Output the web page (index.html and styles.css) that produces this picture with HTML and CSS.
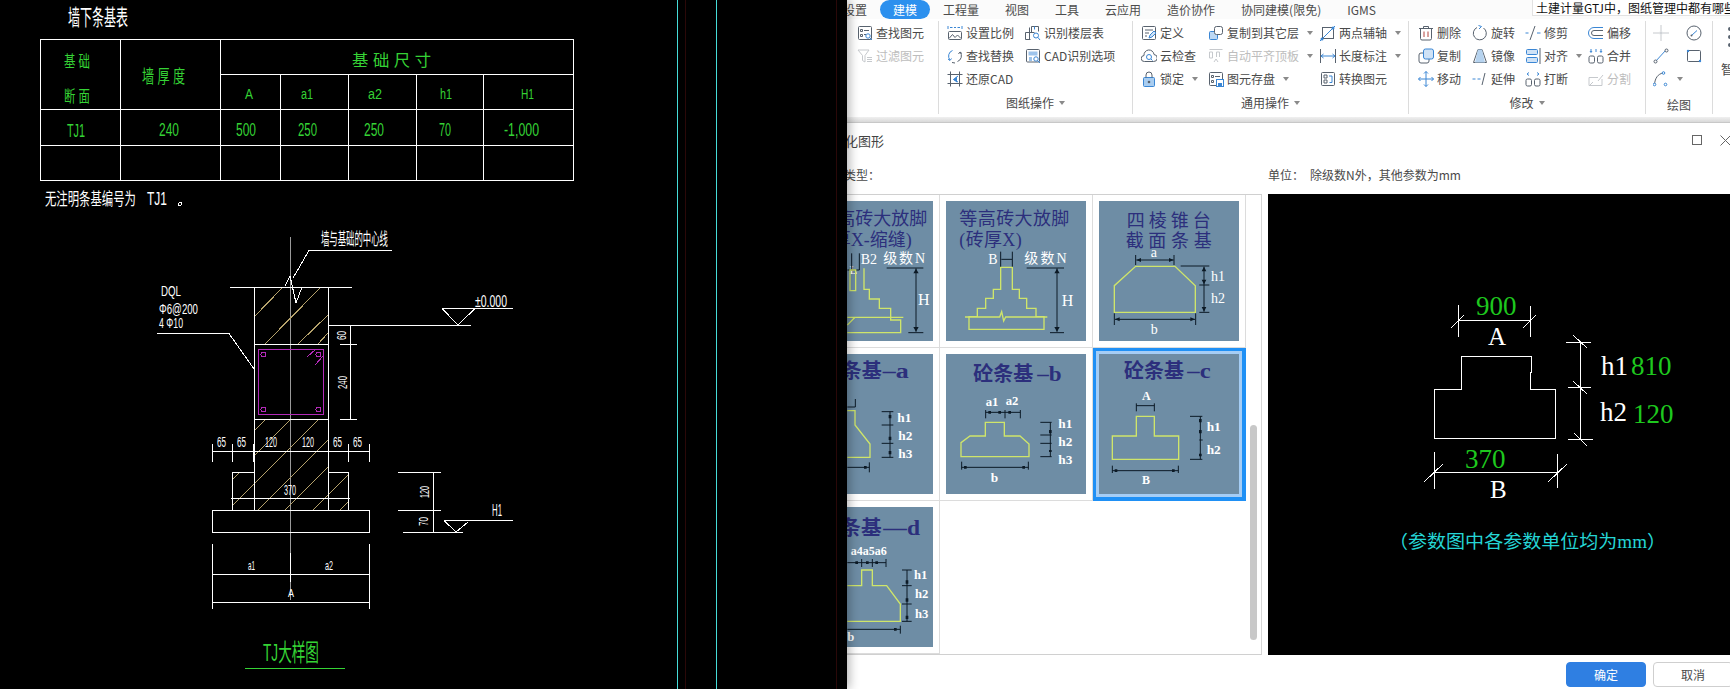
FILE: index.html
```html
<!DOCTYPE html>
<html lang="zh">
<head>
<meta charset="utf-8">
<title>GTJ 参数化图形</title>
<link rel="stylesheet" href="styles.css">
</head>
<body>
<div class="desk">
<section class="cad">
<svg class="cad-svg" width="847" height="689" viewBox="0 0 847 689">
  <g class="ln-cy"><line x1="677.5" y1="0" x2="677.5" y2="689"/><line x1="716.5" y1="0" x2="716.5" y2="689"/></g>
  <g class="ln-rd"><line x1="685.5" y1="0" x2="685.5" y2="689"/><line x1="836.5" y1="0" x2="836.5" y2="689"/></g>

  <text class="w" x="68" y="25" font-size="22" textLength="60" lengthAdjust="spacingAndGlyphs">墙下条基表</text>
  <g class="ln-w">
    <path d="M40.5 39.5H573.5V180.5H40.5Z"/>
    <path d="M220.5 74.5H573.5M40.5 109.5H573.5M40.5 145.5H573.5"/>
    <path d="M120.5 39.5V180.5M220.5 39.5V180.5M280.5 74.5V180.5M348.5 74.5V180.5M416.5 74.5V180.5M483.5 74.5V180.5"/>
  </g>
  <g class="g">
    <text x="64" y="67" font-size="16" textLength="26" lengthAdjust="spacingAndGlyphs">基 础</text>
    <text x="64" y="102" font-size="16" textLength="26" lengthAdjust="spacingAndGlyphs">断 面</text>
    <text x="142" y="83" font-size="18" textLength="43" lengthAdjust="spacingAndGlyphs">墙 厚 度</text>
    <text x="352" y="66" font-size="16" textLength="79" lengthAdjust="spacingAndGlyphs">基 础 尺 寸</text>
    <text x="245" y="99" font-size="14" textLength="8" lengthAdjust="spacingAndGlyphs">A</text>
    <text x="301" y="99" font-size="14" textLength="12" lengthAdjust="spacingAndGlyphs">a1</text>
    <text x="368" y="99" font-size="14" textLength="14" lengthAdjust="spacingAndGlyphs">a2</text>
    <text x="440" y="99" font-size="14" textLength="12" lengthAdjust="spacingAndGlyphs">h1</text>
    <text x="521" y="99" font-size="14" textLength="13" lengthAdjust="spacingAndGlyphs">H1</text>
    <text x="67" y="137" font-size="18" textLength="18" lengthAdjust="spacingAndGlyphs">TJ1</text>
    <text x="159" y="136" font-size="18" textLength="20" lengthAdjust="spacingAndGlyphs">240</text>
    <text x="236" y="136" font-size="18" textLength="20" lengthAdjust="spacingAndGlyphs">500</text>
    <text x="298" y="136" font-size="18" textLength="19" lengthAdjust="spacingAndGlyphs">250</text>
    <text x="364" y="136" font-size="18" textLength="20" lengthAdjust="spacingAndGlyphs">250</text>
    <text x="439" y="136" font-size="18" textLength="12" lengthAdjust="spacingAndGlyphs">70</text>
    <text x="504" y="136" font-size="18" textLength="35" lengthAdjust="spacingAndGlyphs">-1,000</text>
  </g>
  <text class="w" x="45" y="205" font-size="17" textLength="91" lengthAdjust="spacingAndGlyphs">无注明条基编号为</text>
  <text class="w" x="147" y="205" font-size="18" textLength="20" lengthAdjust="spacingAndGlyphs">TJ1</text>
  <circle class="ln-w" cx="180" cy="204" r="1.5"/>

  <line class="ln-gr" x1="290.5" y1="237" x2="290.5" y2="600"/>
  <g class="ln-tan">
    <path d="M254 317L282 288M265 344L320 288M298 344L328 315M318 344L328 333"/>
    <path d="M254 431L265 420M254 456L290 420M233 505L318 420M258 510L328 440M285 510L328 467M313 510L348 475M340 510L348 502M233 479L240 472M253 457L259 451"/>
  </g>
  <g class="ln-w">
    <path d="M230 287.5H352M254.5 287.5V510.5M328.5 287.5V325M328.5 325V510.5"/>
    <path d="M254.5 344.5H328.5M254.5 419.5H328.5"/>
    <path d="M285 286L290 276L296 303L302 287"/>
    <path d="M309 250.5H392M309 250.5L293 278"/>
    <path d="M157 333.5H229L254 369"/>
    <path d="M329 325.5H471M442 308.5L458 325L475 308.5M442 308.5H513"/>
    <path d="M350.5 325.5V419.5M340 344.5H357M340 419.5H357M345 325.5H353"/>
    <path d="M212.5 451.5H369.5M212.5 444V462M232.5 444V462M253.5 444V462M328.5 444V462M348.5 444V462M369.5 444V462"/>
    <path d="M254.5 451.5V472.5H232.5V510.5M328.5 451.5V472.5H348.5V510.5"/>
    <path d="M212.5 510.5H369.5V532.5H212.5Z"/>
    <path d="M231 498.5H350"/>
    <path d="M212.5 544V609M369.5 544V609M212.5 574.5H369.5M212.5 602.5H369.5M290.5 553V582"/>
    <path d="M433.5 472.5V532.5M398 472.5H441M398 510.5H441M403 532.5H463"/>
    <path d="M444 520.5H513M444 520.5L456 532L468 522"/>
  </g>
  <g class="ln-pu">
    <rect x="258.5" y="349.5" width="65" height="65"/>
    <circle cx="263.5" cy="354.5" r="2.5"/><circle cx="318.5" cy="354.5" r="2.5"/><circle cx="263.5" cy="409.5" r="2.5"/><circle cx="318.5" cy="409.5" r="2.5"/>
    <path d="M307 357L315 350M315 365L323 356"/>
  </g>
  <g class="w">
    <text x="321" y="245" font-size="17" textLength="67" lengthAdjust="spacingAndGlyphs">墙与基础的中心线</text>
    <text x="161" y="296" font-size="14" textLength="20" lengthAdjust="spacingAndGlyphs">DQL</text>
    <text x="159" y="314" font-size="15" textLength="39" lengthAdjust="spacingAndGlyphs">Φ6@200</text>
    <text x="159" y="328" font-size="15" textLength="24" lengthAdjust="spacingAndGlyphs">4 Φ10</text>
    <text x="475" y="307" font-size="16" textLength="32" lengthAdjust="spacingAndGlyphs">±0.000</text>
    <text transform="rotate(-90 346 340)" x="346" y="340" font-size="13" textLength="9" lengthAdjust="spacingAndGlyphs">60</text>
    <text transform="rotate(-90 347 389)" x="347" y="389" font-size="13" textLength="13" lengthAdjust="spacingAndGlyphs">240</text>
    <text x="217" y="447" font-size="14" textLength="9" lengthAdjust="spacingAndGlyphs">65</text>
    <text x="237" y="447" font-size="14" textLength="9" lengthAdjust="spacingAndGlyphs">65</text>
    <text x="265" y="447" font-size="14" textLength="12" lengthAdjust="spacingAndGlyphs">120</text>
    <text x="302" y="447" font-size="14" textLength="12" lengthAdjust="spacingAndGlyphs">120</text>
    <text x="333" y="447" font-size="14" textLength="9" lengthAdjust="spacingAndGlyphs">65</text>
    <text x="353" y="447" font-size="14" textLength="9" lengthAdjust="spacingAndGlyphs">65</text>
    <text x="284" y="495" font-size="14" textLength="12" lengthAdjust="spacingAndGlyphs">370</text>
    <text x="248" y="570" font-size="13" textLength="7" lengthAdjust="spacingAndGlyphs">a1</text>
    <text x="325" y="570" font-size="13" textLength="8" lengthAdjust="spacingAndGlyphs">a2</text>
    <text x="288" y="597" font-size="11" textLength="6" lengthAdjust="spacingAndGlyphs">A</text>
    <text transform="rotate(-90 429 498)" x="429" y="498" font-size="13" textLength="12" lengthAdjust="spacingAndGlyphs">120</text>
    <text transform="rotate(-90 428 526)" x="428" y="526" font-size="13" textLength="9" lengthAdjust="spacingAndGlyphs">70</text>
    <text x="492" y="516" font-size="16" textLength="10" lengthAdjust="spacingAndGlyphs">H1</text>
  </g>
  <text class="g" x="263" y="661" font-size="24" textLength="56" lengthAdjust="spacingAndGlyphs">TJ大样图</text>
  <line class="ln-g" x1="245" y1="668.5" x2="345" y2="668.5"/>
</svg>
</section>

<main class="app">
  <nav class="tabs">
    <span class="tab tab-first">设置</span>
    <span class="tab tab-on">建模</span>
    <span class="tab">工程量</span>
    <span class="tab">视图</span>
    <span class="tab">工具</span>
    <span class="tab">云应用</span>
    <span class="tab">造价协作</span>
    <span class="tab">协同建模(限免)</span>
    <span class="tab">IGMS</span>
    <span class="search">土建计量GTJ中，图纸管理中都有哪些功能</span>
  </nav>

  <div class="ribbon">
    <svg class="defs" width="0" height="0">
      <symbol id="i-find" viewBox="0 0 16 16"><rect class="sg" x="1.5" y="1.5" width="13" height="13" rx="1"/><path class="sg" d="M3.5 4.5h2v2h-2zM7 5.5h5M3.5 9.5h2v2h-2zM7 9.5h2"/><circle class="sb wf" cx="11" cy="11" r="2.2"/><path class="sb" d="M12.6 12.6L15 15"/></symbol>
      <symbol id="i-save" viewBox="0 0 16 16"><rect class="sg" x="1.5" y="1.5" width="13" height="13" rx="1"/><path class="sg" d="M3.5 4.5h2v2h-2zM7 5.5h5M3.5 9.5h2v2h-2z"/><rect class="sb wf" x="8.500" y="8.500" width="7" height="7"/><path class="fb" d="M10 12h4v3h-4z"/></symbol>
    </svg>

    <div class="rgroup rg0">
      <div class="rgrid">
        <div class="item"><svg class="ic"><use href="#i-find"/></svg>查找图元</div>
        <div class="item off"><svg class="ic" viewBox="0 0 16 16"><path class="sd" d="M1 2h11L8 7.500V14L5.500 12.500V7.500Z"/><path class="sd" d="M10 9.500h5M10 11.500h5M10 13.500h5"/></svg>过滤图元</div>
      </div>
    </div>

    <div class="rgroup rg1">
      <div class="rgrid">
        <div class="item"><svg class="ic" viewBox="0 0 16 16"><path class="sb" d="M1 1v3M15 1v3M3 2.500h2.500M7 2.500h2M10.500 2.500H13"/><rect class="sg" x="1.500" y="6.500" width="13" height="8" rx="1"/><path class="sg" d="M2 13.500l3.500-4 2.500 3 2.500-2.500 3.500 3.500"/></svg>设置比例</div>
        <div class="item"><svg class="ic" viewBox="0 0 16 16"><path class="sb" d="M5.500 2.500A6 6 0 0 0 3 12"/><path class="sg" d="M10.500 13.500A6 6 0 0 0 13 4"/><path class="sb" d="M1 11l2 1.500L4.500 10.500"/><path class="sg" d="M15 5.500L13 4 11.500 6M5 14.500l3 .5"/></svg>查找替换</div>
        <div class="item"><svg class="ic" viewBox="0 0 16 16"><path class="sg" d="M3.500 0.500v15M12.500 0.500v15M0.500 3.500h15M0.500 12.500h15"/><path class="sb" d="M11 5L6.500 8.500 11 11"/><path class="fb" d="M6 8.500l4-3v6z"/></svg>还原CAD</div>
        <div class="item"><svg class="ic" viewBox="0 0 16 16"><path class="sg" d="M0.500 7.500h9M4.500 2.500v12M0.500 14.500h5M0.500 7.500v7M6.500 1.500h7v5M6.500 1.500v6"/><path class="sb" d="M9.500 1.500v3"/><circle class="sb wf" cx="11" cy="10.500" r="2.500"/><path class="sb" d="M12.800 12.300L15 15"/></svg>识别楼层表</div>
        <div class="item"><svg class="ic" viewBox="0 0 16 16"><rect class="sg" x="1.500" y="1.500" width="13" height="12.500" rx="1"/><rect class="fb3n" x="3.500" y="3.500" width="9" height="4"/><path class="sb" d="M4 10h3M4 12h3"/><circle class="sb wf" cx="11" cy="11" r="2.200"/><path class="sb" d="M12.600 12.600L15 15"/></svg>CAD识别选项</div>
      </div>
      <div class="rlabel">图纸操作<i class="caret"></i></div>
    </div>

    <div class="rgroup rg2">
      <div class="rgrid">
        <div class="item"><svg class="ic" viewBox="0 0 16 16"><rect class="sg" x="1.500" y="1.500" width="13" height="13" rx="1"/><path class="sg" d="M4 5h8M4 8h4M4 11h2"/><path class="sb2" d="M8 13l1-3 4-4 2 2-4 4z"/></svg>定义</div>
        <div class="item"><svg class="ic" viewBox="0 0 16 16"><path class="sg" d="M4 13.500H3.500a3 3 0 0 1-.5-6A5 5 0 0 1 13 6.500a3.500 3.500 0 0 1-.5 7z"/><circle class="sb" cx="8" cy="9" r="2.500"/><path class="sb" d="M10 11l1.500 1.500"/></svg>云检查</div>
        <div class="item"><svg class="ic" viewBox="0 0 16 16"><rect class="fb1" x="2.500" y="6.500" width="11" height="9" rx="1"/><path class="sg" d="M5 6.500V4a3 3 0 0 1 6 0v2.500"/><circle class="fd" cx="8" cy="11" r="1.300"/></svg>锁定<i class="caret"></i></div>
        <div class="item"><svg class="ic" viewBox="0 0 16 16"><rect class="fb2" x="1.500" y="6.500" width="8" height="8" rx="1"/><rect class="sg wf" x="6.500" y="1.500" width="8" height="8" rx="2"/></svg>复制到其它层<i class="caret"></i></div>
        <div class="item off"><svg class="ic" viewBox="0 0 16 16"><path class="sd" d="M1.500 1.500h13M1.500 4v6M4.500 4v6M1.500 4h3M1.500 10h3M11.500 4v5M8.500 4v5M8.500 4h3M6 14l2-3 2 3"/></svg>自动平齐顶板<i class="caret"></i></div>
        <div class="item"><svg class="ic"><use href="#i-save"/></svg>图元存盘<i class="caret"></i></div>
        <div class="item"><svg class="ic" viewBox="0 0 16 16"><rect class="sg" x="2.500" y="2.500" width="11" height="11"/><path class="sb" d="M0 16L15 1"/><circle class="fb" cx="2" cy="14" r="1.500"/><circle class="fb" cx="13" cy="3" r="1.500"/></svg>两点辅轴<i class="caret"></i></div>
        <div class="item"><svg class="ic" viewBox="0 0 16 16"><path class="sg" d="M0.500 1v14M15.500 1v14"/><path class="sb" d="M1 8h14M3.500 6L1 8l2.500 2M12.500 6L15 8l-2.500 2"/></svg>长度标注<i class="caret"></i></div>
        <div class="item"><svg class="ic" viewBox="0 0 16 16"><rect class="sg" x="1.500" y="1.500" width="13" height="13" rx="1"/><path class="sg" d="M4 4h3v3H4zM4 9h3v3H4z"/><path class="sb" d="M9 5h3v3M9.500 11.500H12V8"/></svg>转换图元</div>
      </div>
      <div class="rlabel">通用操作<i class="caret"></i></div>
    </div>

    <div class="rgroup rg3">
      <div class="rgrid">
        <div class="item"><svg class="ic" viewBox="0 0 16 16"><path class="sg" d="M1 3.500h14M5.500 3.500V1.500h5v2M2.500 3.500v10a1.500 1.500 0 0 0 1.500 1.500h8a1.500 1.500 0 0 0 1.500-1.500v-10"/><path class="sr" d="M6 6.500v5.500M10 6.500v5.500"/></svg>删除</div>
        <div class="item"><svg class="ic" viewBox="0 0 16 16"><rect class="sg" x="1" y="5" width="10" height="10" rx="2"/><rect class="fb3" x="5.500" y="1" width="10" height="10" rx="2"/></svg>复制</div>
        <div class="item"><svg class="ic" viewBox="0 0 16 16"><path class="sb" d="M8 0.500v15M0.500 8h15M6 2.500L8 0.500l2 2M6 13.500l2 2 2-2M2.500 6L0.500 8l2 2M13.500 6l2 2-2 2"/></svg>移动</div>
        <div class="item"><svg class="ic" viewBox="0 0 16 16"><path class="sg" d="M5 2.500A6.500 6.500 0 1 0 11.500 3"/><path class="sb" d="M6.500 0.500L9.500 1.500 7 4"/></svg>旋转</div>
        <div class="item"><svg class="ic" viewBox="0 0 16 16"><path class="sg" d="M1.500 14.500L6 1.500H10L14.500 14.500Z"/><path class="fb4" d="M6 1.500L3 14.500H8V1.500zM8 1.500V14.500H13L10 1.500z"/></svg>镜像</div>
        <div class="item"><svg class="ic" viewBox="0 0 16 16"><path class="sb" d="M0.500 8h3M5.500 8h3"/><path class="sg" d="M10 14L13 2"/></svg>延伸</div>
        <div class="item"><svg class="ic" viewBox="0 0 16 16"><path class="sb" d="M0.500 8h3M12 8h3.500"/><path class="sg" d="M5 15L10 1"/></svg>修剪</div>
        <div class="item"><svg class="ic" viewBox="0 0 16 16"><rect class="fb3" x="1.500" y="1.500" width="11" height="5" rx="1"/><rect class="fb3" x="1.500" y="9.500" width="11" height="5" rx="1"/><path class="sg" d="M15 0v16"/></svg>对齐<i class="caret"></i></div>
        <div class="item"><svg class="ic" viewBox="0 0 16 16"><path class="sb" d="M4 4.500L2 3l2-1.500M12 4.500L14 3 12 1.500"/><rect class="sg" x="1" y="8" width="5.500" height="7" rx="1.500"/><rect class="sg" x="9.500" y="8" width="5.500" height="7" rx="1.500"/></svg>打断</div>
        <div class="item"><svg class="ic" viewBox="0 0 16 16"><path class="sb" d="M15 2.500H6a5.500 5.500 0 0 0 0 11h9"/><path class="sg" d="M15 5.500H6a2.500 2.500 0 0 0 0 5h9"/></svg>偏移</div>
        <div class="item"><svg class="ic" viewBox="0 0 16 16"><path class="sb" d="M3 1v3M2 3l1 1.500L4 3M13 1v3M12 3l1 1.500L14 3M8 1v3"/><rect class="sg" x="1" y="8" width="5.500" height="7" rx="1.500"/><rect class="sg" x="9.500" y="8" width="5.500" height="7" rx="1.500"/></svg>合并</div>
        <div class="item off"><svg class="ic" viewBox="0 0 16 16"><path class="sd" d="M1 6.500h9M1 6.500V14.500H14V8M10 10l5-6M2 14l3-3"/></svg>分割</div>
      </div>
      <div class="rlabel">修改<i class="caret"></i></div>
    </div>

    <div class="rgroup rg4">
      <div class="rgrid">
        <div class="item"><svg class="ic" viewBox="0 0 16 16"><path class="sd" d="M8 0v6M8 10v6M0 8h6M10 8h6"/><circle class="fdl" cx="8" cy="8" r="1.800"/></svg></div>
        <div class="item"><svg class="ic" viewBox="0 0 16 16"><path class="sb" d="M2 14L13 2"/><circle class="sg wf" cx="2.500" cy="13.500" r="1.500"/><circle class="sg wf" cx="13.500" cy="2.500" r="1.500"/></svg></div>
        <div class="item"><svg class="ic" viewBox="0 0 16 16"><path class="sg" d="M1.500 13.500C2 7 5 3 10 2"/><circle class="sb wf" cx="1.500" cy="13.500" r="1.300"/><circle class="sb wf" cx="10.500" cy="2" r="1.300"/><circle class="sb wf" cx="12.500" cy="13.500" r="1.300"/></svg><i class="caret"></i></div>
        <div class="item"><svg class="ic" viewBox="0 0 16 16"><circle class="sg" cx="8" cy="8" r="7"/><path class="sb" d="M5.500 10.500L11 5.500"/><circle class="fd" cx="5.500" cy="10.500" r="1"/></svg></div>
        <div class="item"><svg class="ic" viewBox="0 0 16 16"><rect class="sg" x="1.500" y="2.500" width="13" height="11" rx="1"/><circle class="fb" cx="2" cy="3" r="1.200"/><circle class="fb" cx="14" cy="13" r="1.200"/></svg></div>
      </div>
      <div class="rlabel rlabel-low">绘图</div>
    </div>

    <div class="rgroup rg5">
      <div class="dots"><i></i><i></i><i></i></div>
      <div class="smart">智</div>
    </div>
  </div>
  <div class="ribbon-foot"></div>

  <section class="dialog">
    <header class="dlg-title">
      <span class="dlg-name">参数化图形</span>
      <span class="dlg-max"></span>
      <svg class="dlg-close" width="11" height="11" viewBox="0 0 11 11"><path d="M0.500 0.500L10.500 10.500M10.500 0.500L0.500 10.500"/></svg>
    </header>
    <div class="dlg-labels">
      <span class="lb-type">类型：</span>
      <span>单位：</span>
      <span class="lb-unit">除级数N外，其他参数为mm</span>
    </div>
    <div class="dlg-body">
      <div class="gallery-box">
        <div class="gallery">
          <div class="cell"><svg class="thumb" viewBox="-141 33 420 420">
            <text class="tt" x="262" y="105" text-anchor="end" font-size="54">等高砖大放脚</text>
            <text class="tt" x="215" y="168" text-anchor="end" font-size="54">(砖厚X-缩缝)</text>
            <text class="tw" x="28" y="252" font-size="40">L</text>
            <text class="tw" x="62" y="222" font-size="42">B2</text>
            <text class="tw" x="130" y="220" font-size="42" textLength="125">级数N</text>
            <text class="tw" x="234" y="345" font-size="48">H</text>
            <path class="dk" d="M22 240h36M35 190v50M58 190v50M140 234H250M205 428H250M228 235V425"/>
            <path class="dkf" d="M228 236l-8 14h16zM228 425l-8-14h16z"/>
            <path class="yl" d="M30 240h17v62H30zM72 235v63h16v29h30v28h34v35h30v38H22M22 382h168M22 405l23-23"/>
          </svg></div>
          <div class="cell"><svg class="thumb" viewBox="318 33 420 420">
            <text class="tt" x="358" y="105" font-size="54" textLength="330">等高砖大放脚</text>
            <text class="tt" x="358" y="168" font-size="54" textLength="187">(砖厚X)</text>
            <text class="tw" x="445" y="222" font-size="42">B</text>
            <text class="tw" x="553" y="220" font-size="42" textLength="127">级数N</text>
            <text class="tw" x="665" y="347" font-size="48">H</text>
            <path class="dk" d="M482 185v47M517 185v47M484 208h32M560 234H672M630 428H672M651 235V425"/>
            <path class="dkf" d="M651 236l-8 14h16zM651 425l-8-14h16z"/>
            <path class="yl" d="M482 232h35v66h21v27h22v30h28v25h24v38H387v-38h25v-25h25v-30h23v-27h22zM375 381h104l6-16 6 28 6-12h125"/>
          </svg></div>
          <div class="cell"><svg class="thumb" viewBox="777 33 420 420">
            <text class="tt" x="860" y="110" font-size="54" textLength="252">四 棱 锥 台</text>
            <text class="tt" x="857" y="170" font-size="54" textLength="258">截 面 条 基</text>
            <text class="tw" x="932" y="202" font-size="42">a</text>
            <text class="tw" x="1113" y="272" font-size="42">h1</text>
            <text class="tw" x="1113" y="340" font-size="42">h2</text>
            <text class="tw" x="932" y="433" font-size="42">b</text>
            <path class="dk" d="M887 195v30M1002 195v30M889 210h112M1022 228h86M1078 285h30M1078 367h30M1092 230V365M823 370v35M1067 370v35M825 388h240"/>
            <path class="dkf" d="M889 210l14-6v12zM1001 210l-14-6v12zM1092 230l-7 14h14zM1092 283l-7-14h14zM1092 365l-7-14h14zM825 388l14-6v12zM1065 388l-14-6v12z"/>
            <path class="yl" d="M887 229h118l61 58v80H823v-80z"/>
          </svg></div>

          <div class="cell"><svg class="thumb" viewBox="-141 27 420 420">
            <text class="tb" x="125" y="100" text-anchor="end" font-size="60">砼条基</text>
            <text class="tb" x="128" y="100" font-size="60" textLength="78" lengthAdjust="spacingAndGlyphs">–a</text>
            <text class="tw tbw" x="172" y="232" font-size="40">h1</text>
            <text class="tw tbw" x="175" y="285" font-size="40">h2</text>
            <text class="tw tbw" x="175" y="340" font-size="40">h3</text>
            <path class="dk" d="M125 200h35M125 240h35M125 295h35M125 337h35M150 200v137M22 186h24v-24M22 367h66M88 352v30"/>
            <path class="dkf" d="M146 210h8v10h-8zM146 275h8v10h-8zM146 318h8v10h-8zM72 363h8v8h-8z"/>
            <path class="yl" d="M22 197h23v43l45 57v40H22"/>
          </svg></div>
          <div class="cell"><svg class="thumb" viewBox="318 27 420 420">
            <text class="tb" x="400" y="108" font-size="60">砼条基</text>
            <text class="tb" x="592" y="108" font-size="60" textLength="73" lengthAdjust="spacingAndGlyphs">–b</text>
            <text class="tw tbw" x="437" y="183" font-size="38">a1</text>
            <text class="tw tbw" x="497" y="180" font-size="38">a2</text>
            <text class="tw tbw" x="655" y="250" font-size="40">h1</text>
            <text class="tw tbw" x="655" y="303" font-size="40">h2</text>
            <text class="tw tbw" x="655" y="357" font-size="40">h3</text>
            <text class="tw tbw" x="452" y="410" font-size="40">b</text>
            <path class="dk" d="M437 195v25M495 195v25M541 195v25M437 202h104M601 232h34M601 270h34M601 295h34M601 335h34M631 232v103M365 350v24M565 350v24M365 367h200"/>
            <path class="dkf" d="M445 198h8v8h-8zM475 198h8v8h-8zM505 198h8v8h-8zM627 255h8v10h-8zM627 315h8v6h-8zM372 363h8v8h-8zM547 363h8v8h-8z"/>
            <path class="yl" d="M436 232h57v41h47l27 24v38H363v-42l27-20h46z"/>
          </svg></div>
          <div class="cell cell-on"><svg class="thumb" viewBox="777 27 420 420">
            <text class="tb" x="852" y="100" font-size="60">砼条基</text>
            <text class="tb" x="1042" y="100" font-size="60" textLength="70" lengthAdjust="spacingAndGlyphs">–c</text>
            <text class="tw tbw" x="906" y="165" font-size="36">A</text>
            <text class="tw tbw" x="1100" y="258" font-size="40">h1</text>
            <text class="tw tbw" x="1100" y="327" font-size="40">h2</text>
            <text class="tw tbw" x="906" y="417" font-size="36">B</text>
            <path class="dk" d="M889 175v24M943 175v24M889 182h54M1050 214h37M1050 343h37M1078 285h10M1081 214v129M817 362v22M1015 362v22M817 377h198"/>
            <path class="dkf" d="M1077 222h8v10h-8zM1077 255h8v10h-8zM1077 326h8v8h-8zM824 373h8v8h-8zM996 373h8v8h-8z"/>
            <path class="yl" d="M889 214h54v59h73v70H817v-70h72z"/>
          </svg></div>

          <div class="cell"><svg class="thumb" viewBox="-141 22 420 420">
            <text class="tb" x="125" y="105" text-anchor="end" font-size="62">砼条基</text>
            <text class="tb" x="130" y="105" font-size="62" textLength="110" lengthAdjust="spacingAndGlyphs">—d</text>
            <text class="tw tbw" x="140" y="165" text-anchor="end" font-size="36">a4a5a6</text>
            <text class="tw tbw" x="222" y="238" font-size="38">h1</text>
            <text class="tw tbw" x="225" y="295" font-size="38">h2</text>
            <text class="tw tbw" x="225" y="355" font-size="38">h3</text>
            <text class="tw tbw" x="22" y="425" font-size="38">b</text>
            <path class="dk" d="M22 189h116M65 178v24M97 178v24M138 178v24M186 211h29M186 258h29M186 313h29M186 365h29M201 211v154M22 389h159M181 378v24"/>
            <path class="dkf" d="M46 185h8v8h-8zM78 185h8v8h-8zM106 185h8v8h-8zM197 242h8v10h-8zM197 296h8v10h-8zM197 348h8v10h-8zM162 385h8v8h-8z"/>
            <path class="yl" d="M22 258h43v-47h32v47h43l41 55v52H22"/>
          </svg></div>
        </div>
        <div class="track"><div class="thumbbar"></div></div>
      </div>

      <div class="preview">
        <svg class="pv" width="462" height="461" viewBox="1268 194 462 461">
          <g class="ln-w">
            <path d="M1461.500 356.500H1531.500V372.500H1530.500V389.500H1555.500V438.500H1434.500V389.500H1461.500Z"/>
            <path d="M1458.500 320.500H1530.500M1458.500 305V337M1530.500 306V337M1451 328L1464 315M1523 328L1536 315"/>
            <path d="M1580.500 342V439M1566 342.500H1591M1568 387.500H1591M1568 439.500H1593M1573 335L1587 348M1573 381L1587 394M1574 433L1587 446"/>
            <path d="M1434.500 472.500H1557.500M1434.500 452V489M1557.500 454V488M1424 482L1443 464M1548 482L1567 464"/>
          </g>
          <text class="pg" x="1476" y="315" font-size="27">900</text>
          <text class="pw" x="1488" y="345" font-size="25">A</text>
          <text class="pw" x="1601" y="375" font-size="27">h1</text>
          <text class="pg" x="1631" y="375" font-size="27">810</text>
          <text class="pw" x="1600" y="421" font-size="27">h2</text>
          <text class="pg" x="1633" y="423" font-size="27">120</text>
          <text class="pg" x="1465" y="468" font-size="27">370</text>
          <text class="pw" x="1490" y="498" font-size="25">B</text>
          <text class="pc" x="1389" y="548" font-size="18" textLength="277" lengthAdjust="spacingAndGlyphs">（参数图中各参数单位均为mm）</text>
        </svg>
      </div>
    </div>
    <footer class="dlg-foot">
      <button class="btn btn-ok">确定</button>
      <button class="btn">取消</button>
    </footer>
  </section>
</main>
</div>
</body>
</html>
```
FILE: styles.css
```css
* { box-sizing: border-box; }
html, body { margin: 0; padding: 0; height: 100%; overflow: hidden; background: #000; }
body { font-family: "Noto Sans CJK SC", "Noto Sans", sans-serif; font-size: 12px; color: #4a4a4a; }

.desk { display: flex; width: 1730px; height: 689px; }

/* CAD window */
.cad { width: 847px; height: 689px; flex: none; background: #000; position: relative; z-index: 2; box-shadow: 2px 0 10px rgba(0, 0, 0, .32); }
.cad-svg { display: block; shape-rendering: crispEdges; }
.cad-svg text { font-family: "Liberation Sans", "Noto Sans CJK SC", sans-serif; }
.w { fill: #fff; }
.g { fill: #35d335; }
.ln-w, .ln-cy, .ln-rd, .ln-gr, .ln-tan, .ln-pu, .ln-g { fill: none; stroke-width: 1; }
.ln-w { stroke: #fff; }
.ln-cy { stroke: #45dcd8; }
.ln-rd { stroke: #2a0808; }
.ln-gr { stroke: #9a9a9a; }
.ln-tan { stroke: #b5a26c; }
.ln-pu { stroke: #b22ab8; }
.ln-g { stroke: #35d335; }

/* Application */
.app { flex: 1; min-width: 0; height: 689px; background: #fff; overflow: hidden; display: flex; flex-direction: column; }

.tabs { height: 19px; flex: none; display: flex; align-items: center; background: #fbfbfb; }
.tab { padding: 0 13px; height: 19px; line-height: 19px; white-space: nowrap; color: #4c4c4c; }
.tab-first { margin-left: -17px; }
.tab-on { background: #2c90ee; color: #fff; border-radius: 10px; }
.search { margin-left: auto; width: 198px; height: 16px; line-height: 16px; padding-left: 3px; align-self: flex-start; background: #fff; color: #111; white-space: nowrap; overflow: hidden; border-left: 1px solid #e2e2e2; border-bottom: 1px solid #e2e2e2; }

.ribbon { height: 98px; flex: none; display: flex; background: #fff; overflow: hidden; }
.defs { position: absolute; }
.rgroup { flex: none; height: 93px; margin-top: 2px; border-right: 1px solid #dcdcdc; display: flex; flex-direction: column; }
.rgrid { display: grid; grid-auto-flow: column; grid-template-rows: repeat(3, 23px); height: 70px; }
.rg0 { width: 92px; padding-left: 10px; }
.rg1 { width: 194px; padding-left: 8px; }
.rg1 .rgrid { grid-template-columns: 78px 1fr; }
.rg2 { width: 276px; padding-left: 8px; }
.rg2 .rgrid { grid-template-columns: 67px 112px 1fr; }
.rg3 { width: 237px; padding-left: 9px; }
.rg3 .rgrid { grid-template-columns: 54px 53px 63px 1fr; }
.rg4 { width: 67px; padding-left: 7px; }
.rg4 .rgrid { grid-template-columns: 33px 1fr; }
.rg5 { flex: 1; border-right: 0; padding-left: 8px; }

.item { display: flex; align-items: center; gap: 3px; height: 23px; white-space: nowrap; color: #4a4a4a; }
.item.off { color: #bdbdbd; }
.ic { width: 16px; height: 16px; flex: none; }
.ic * { stroke-width: 1; }
.sg { fill: none; stroke: #58626e; }
.sb { fill: none; stroke: #3a86d4; }
.sb2 { fill: #cfe2f6; stroke: #3a86d4; }
.sd { fill: none; stroke: #c6c9cd; }
.sr { fill: none; stroke: #b4453f; }
.wf { fill: #fff; }
.fb { fill: #3a86d4; stroke: none; }
.fd { fill: #58626e; stroke: none; }
.fdl { fill: #cfd2d6; stroke: none; }
.fb1 { fill: #a9cdf0; stroke: #3a86d4; }
.fb2 { fill: #bcd8f4; stroke: #3a86d4; }
.fb3 { fill: #cfe2f6; stroke: #3a86d4; }
.fb3n { fill: #9ec4ec; stroke: none; }
.fb4 { fill: #b6d3ef; stroke: none; }

.caret { display: inline-block; width: 0; height: 0; margin-left: 5px; border-left: 3.5px solid transparent; border-right: 3.5px solid transparent; border-top: 4px solid #8a8a8a; }
.rlabel { height: 23px; display: flex; align-items: center; justify-content: center; color: #4a4a4a; margin-left: -8px; }
.rg3 .rlabel { margin-left: -9px; }
.rlabel-low { padding-top: 4px; margin-left: -7px; }

.dots { display: flex; flex-direction: column; gap: 4px; margin: 6px 0 0 7px; }
.dots i { display: block; width: 4px; height: 4px; border-radius: 50%; background: #58626e; }
.smart { margin-top: 12px; font-size: 13px; }

.ribbon-foot { height: 6px; flex: none; background: linear-gradient(#f0f0f0, #d9d9d9); border-bottom: 1px solid #c8c8c8; }

/* Dialog */
.dialog { flex: 1; min-height: 0; display: flex; flex-direction: column; background: #fff; }
.dlg-title { height: 34px; flex: none; display: flex; align-items: center; font-size: 13px; color: #444; }
.dlg-name { margin-left: -28px; margin-right: auto; white-space: nowrap; }
.dlg-max { width: 10px; height: 10px; border: 1px solid #666; margin-right: 18px; }
.dlg-close { margin-right: -1px; }
.dlg-close path { fill: none; stroke: #666; }
.dlg-labels { height: 37px; flex: none; display: flex; align-items: flex-start; padding-top: 9px; line-height: 18px; color: #4a4a4a; }
.lb-type { margin-left: -3px; width: 424px; }
.lb-unit { margin-left: 6px; }

.dlg-body { height: 461px; flex: none; display: flex; gap: 6px; }
.gallery-box { width: 415px; flex: none; display: flex; border-top: 1px solid #d0d0d0; border-bottom: 1px solid #d0d0d0; border-right: 1px solid #d6d6d6; overflow: hidden; }
.gallery { flex: none; margin-left: -60px; width: 459px; display: grid; grid-template-columns: repeat(3, 153px); grid-auto-rows: 153px; }
.cell { padding: 6px 0 0 6px; border-right: 1px solid #dcdcdc; border-bottom: 1px solid #dcdcdc; }
.cell-on { box-shadow: inset 0 0 0 3px #1f90f5, inset 0 0 0 6px #a5cdf5; border-color: #1f90f5; }
.thumb { display: block; width: 140px; height: 140px; background: #6e8da5; }
.thumb text { font-family: "Liberation Serif", "Noto Sans CJK SC", serif; }
.tt { fill: #2c2f7c; }
.tb { fill: #2c2f7c; font-weight: 700; }
.tw { fill: #fff; }
.tbw { font-weight: 700; }
.dk { fill: none; stroke: #0c1a26; stroke-width: 3; }
.dkf { fill: #0c1a26; }
.yl { fill: none; stroke: #cfe56a; stroke-width: 4; }

.track { width: 7px; margin-left: 4px; padding-top: 230px; flex: none; }
.thumbbar { width: 7px; height: 215px; border-radius: 4px; background: #c8c8c8; }

.preview { width: 462px; height: 461px; flex: none; background: #000; }
.pv { display: block; shape-rendering: crispEdges; }
.pv text { font-family: "Liberation Serif", "Noto Sans CJK SC", serif; }
.pg { fill: #1ec81e; }
.pw { fill: #fff; }
.pc { fill: #25d5d5; }

.dlg-foot { flex: 1; display: flex; justify-content: flex-end; gap: 7px; padding-top: 7px; margin-right: -3px; }
.btn { width: 80px; height: 25px; padding: 0; border: 1px solid #cfcfcf; border-radius: 4px; background: #fff; color: #4a4a4a; font: inherit; }
.btn-ok { background: #2f7fe2; border-color: #2f7fe2; color: #fff; }
```
